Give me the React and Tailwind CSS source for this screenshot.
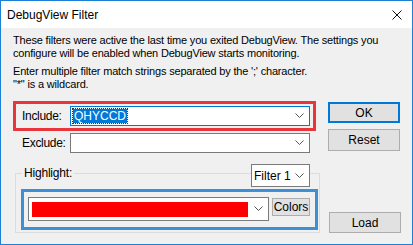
import React from 'react';

const Chevron = () => (
    <svg width="9" height="6" viewBox="0 0 9 6" className="shrink-0">
        <path d="M0.5 0.5 L4.5 4.5 L8.5 0.5" fill="none" stroke="#555" strokeWidth="1" />
    </svg>
);

const Combo = ({ className = '', children, focused = false }) => (
    <div className={`flex items-center bg-white border ${focused ? 'border-[#0078d7]' : 'border-[#7a7a7a]'} ${className}`}>
        <div className="flex-1 flex items-center min-w-0">{children}</div>
        <div className="w-[18px] flex justify-center pr-[2px]">
            <Chevron />
        </div>
    </div>
);

const Button = ({ className = '', children, isDefault = false }) => (
    <div className={`flex items-center justify-center bg-[#e1e1e1] ${isDefault ? 'border-2 border-[#0078d7]' : 'border border-[#adadad]'} text-[12px] text-black ${className}`}>
        {children}
    </div>
);

export default function App() {
    return (
        <div
            className="w-[413px] h-[245px] border border-[#1b80d6] bg-[#f0f0f0] flex flex-col overflow-hidden text-black"
            style={{ fontFamily: '"Liberation Sans", Arial, sans-serif' }}
        >
            {/* Title bar */}
            <div className="h-[27px] bg-white flex items-center justify-between pl-[6px] pr-[10px] shrink-0">
                <span className="text-[12px] leading-none">DebugView Filter</span>
                <svg width="10" height="10" viewBox="0 0 10 10">
                    <path d="M0.5 0.5 L9.5 9.5 M9.5 0.5 L0.5 9.5" stroke="#111" strokeWidth="1" />
                </svg>
            </div>

            <div className="flex flex-col pl-[12px] pt-[6px]">
                <p className="text-[11px] leading-[13px] tracking-[-0.18px] whitespace-nowrap">
                    These filters were active the last time you exited DebugView. The settings you<br />
                    configure will be enabled when DebugView starts monitoring.
                </p>
                <p className="text-[11px] leading-[13px] tracking-[-0.18px] whitespace-nowrap mt-[5px]">
                    Enter multiple filter match strings separated by the ';' character.<br />
                    "*" is a wildcard.
                </p>

                <div className="flex mt-[10px]">
                    {/* Left column */}
                    <div className="w-[307px] flex flex-col">
                        <div className="w-[303px] h-[30px] border-[3px] border-[#e8363c] flex items-center">
                            <span className="w-[54px] pl-[6px] text-[12px] tracking-[-0.3px]">Include:</span>
                            <Combo focused className="w-[240px] h-[20px]">
                                <div className="ml-[1px] border border-dotted border-[#333] flex">
                                    <span className="bg-[#0078d7] text-white text-[12px] leading-[14px] px-[1px]">QHYCCD</span>
                                </div>
                            </Combo>
                        </div>

                        <div className="flex items-center mt-[2px]">
                            <span className="w-[57px] pl-[9px] text-[12px] tracking-[-0.3px]">Exclude:</span>
                            <Combo className="w-[240px] h-[20px]" />
                        </div>

                        {/* Highlight group */}
                        <div className="relative ml-[2px] mt-[20px] w-[305px] h-[60px] border border-[#dcdcdc]">
                            <span className="absolute left-[6px] top-[-8px] bg-[#f0f0f0] px-[2px] text-[12px] leading-[14px] tracking-[-0.2px]">Highlight:</span>
                            <Combo className="absolute left-[235px] top-[-10px] w-[59px] h-[23px]">
                                <span className="pl-[2px] text-[12px]">Filter 1</span>
                            </Combo>

                            <div className="ml-[5px] mt-[15px] w-[297px] h-[41px] border-[3px] border-[#3d8fd8] flex items-start">
                                <div className="ml-[4px] mt-[5px] w-[241px] h-[24px] bg-white border border-[#7a7a7a] flex items-center">
                                    <div className="ml-[2px] w-[218px] h-[17px] bg-[#ff0000] border border-white" />
                                    <div className="flex-1 flex justify-center">
                                        <Chevron />
                                    </div>
                                </div>
                                <Button className="ml-[3px] mt-[6px] w-[38px] h-[18px]">Colors</Button>
                            </div>
                        </div>
                    </div>

                    {/* Right column */}
                    <div className="flex flex-col ml-[8px]">
                        <Button isDefault className="mt-[1px] w-[72px] h-[21px]">OK</Button>
                        <Button className="mt-[6px] w-[72px] h-[22px]">Reset</Button>
                        <Button className="mt-[61px] ml-[1px] w-[72px] h-[21px]">Load</Button>
                    </div>
                </div>
            </div>
        </div>
    );
}
